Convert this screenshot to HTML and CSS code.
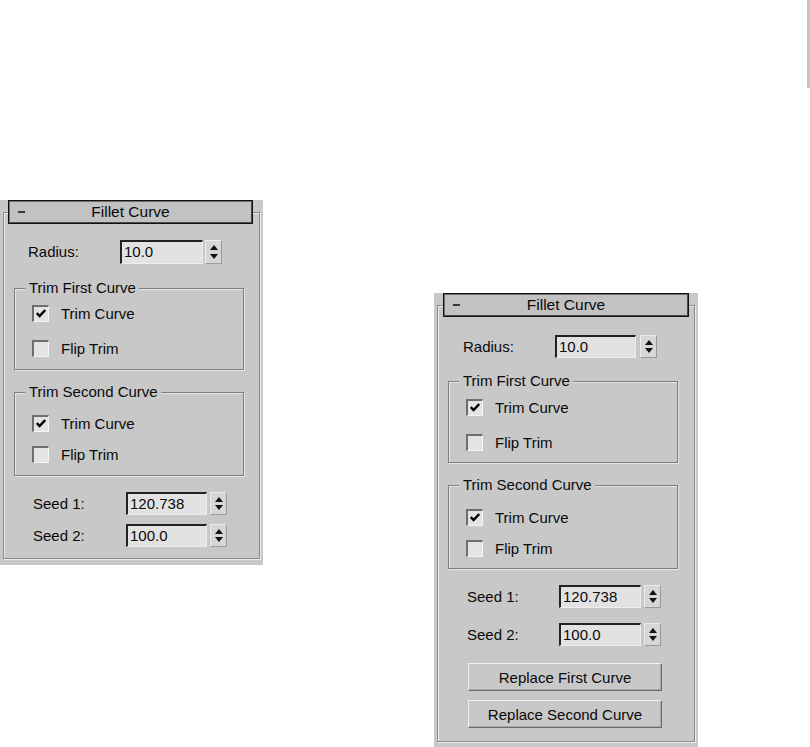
FILE: index.html
```html
<!DOCTYPE html>
<html>
<head>
<meta charset="utf-8">
<link rel="stylesheet" href="styles.css">
</head>
<body>
<div class="canvas">
  <div class="rollout rollout-a">
    <div class="frame">
      <div class="header"><span class="minus"></span><span class="title">Fillet Curve</span><span></span></div>
      <div class="spin-row radius"><span class="label">Radius:</span><span class="input">10.0</span><span class="arrows"><i class="up"></i><i class="down"></i></span></div>
      <div class="group g1">
        <div class="legend">Trim First Curve</div>
        <div class="check-row r1"><span class="box checked"><svg viewBox="0 0 10 9" width="10" height="9"><path d="M0.8 4 L3.6 7 L9.2 1" fill="none" stroke="#000" stroke-width="2.4"/></svg></span><span>Trim Curve</span></div>
        <div class="check-row r2"><span class="box"></span><span>Flip Trim</span></div>
      </div>
      <div class="group g2">
        <div class="legend">Trim Second Curve</div>
        <div class="check-row r1"><span class="box checked"><svg viewBox="0 0 10 9" width="10" height="9"><path d="M0.8 4 L3.6 7 L9.2 1" fill="none" stroke="#000" stroke-width="2.4"/></svg></span><span>Trim Curve</span></div>
        <div class="check-row r2"><span class="box"></span><span>Flip Trim</span></div>
      </div>
      <div class="spin-row seed s1"><span class="label">Seed 1:</span><span class="input">120.738</span><span class="arrows"><i class="up"></i><i class="down"></i></span></div>
      <div class="spin-row seed s2"><span class="label">Seed 2:</span><span class="input">100.0</span><span class="arrows"><i class="up"></i><i class="down"></i></span></div>
    </div>
  </div>

  <div class="rollout rollout-b">
    <div class="frame">
      <div class="header"><span class="minus"></span><span class="title">Fillet Curve</span><span></span></div>
      <div class="spin-row radius"><span class="label">Radius:</span><span class="input">10.0</span><span class="arrows"><i class="up"></i><i class="down"></i></span></div>
      <div class="group g1">
        <div class="legend">Trim First Curve</div>
        <div class="check-row r1"><span class="box checked"><svg viewBox="0 0 10 9" width="10" height="9"><path d="M0.8 4 L3.6 7 L9.2 1" fill="none" stroke="#000" stroke-width="2.4"/></svg></span><span>Trim Curve</span></div>
        <div class="check-row r2"><span class="box"></span><span>Flip Trim</span></div>
      </div>
      <div class="group g2">
        <div class="legend">Trim Second Curve</div>
        <div class="check-row r1"><span class="box checked"><svg viewBox="0 0 10 9" width="10" height="9"><path d="M0.8 4 L3.6 7 L9.2 1" fill="none" stroke="#000" stroke-width="2.4"/></svg></span><span>Trim Curve</span></div>
        <div class="check-row r2"><span class="box"></span><span>Flip Trim</span></div>
      </div>
      <div class="spin-row seed s1"><span class="label">Seed 1:</span><span class="input">120.738</span><span class="arrows"><i class="up"></i><i class="down"></i></span></div>
      <div class="spin-row seed s2"><span class="label">Seed 2:</span><span class="input">100.0</span><span class="arrows"><i class="up"></i><i class="down"></i></span></div>
      <div class="button b1">Replace First Curve</div>
      <div class="button b2">Replace Second Curve</div>
    </div>
  </div>

  <div class="edge-bar"></div>
</div>
</body>
</html>
```
FILE: styles.css
```css
* { box-sizing: border-box; }
html, body { margin: 0; padding: 0; background: #fff; }
body {
  font-family: "Liberation Sans", Arial, sans-serif;
  font-size: 15px;
  color: #0a0a0a;
}
.canvas {
  display: flex;
  align-items: flex-start;
  width: 810px;
  height: 747px;
  overflow: hidden;
}
.edge-bar {
  margin-left: auto;
  width: 3px;
  height: 88px;
  background: #c4c4c4;
}

/* rollout */
.rollout {
  background: #c8c8c8;
  padding-top: 12px;
  padding-bottom: 6px;
}
.rollout-a { margin-top: 200px; width: 263px; }
.rollout-b { margin-top: 293px; margin-left: 171px; width: 264px; }

.frame {
  margin: 0 3px;
  border: 1px solid #8a8a8a;
  box-shadow: inset 1px 1px 0 #ececec, 1px 1px 0 #ececec;
}
.rollout-a .frame { padding-bottom: 11px; }
.rollout-b .frame { padding-bottom: 13px; }

.header {
  display: grid;
  grid-template-columns: 1fr auto 1fr;
  align-items: center;
  height: 24px;
  margin: -13px 6px 0 4px;
  border: 1px solid #111;
  background: #c2c2c2;
  box-shadow: inset 1px 1px 0 #6e6e6e, inset -1px -1px 0 #4a4a4a;
  position: relative;
}
.rollout-b .header { margin-left: 5px; margin-right: 5px; }
.minus {
  width: 7px;
  height: 2px;
  background: #3a3a3a;
  margin-left: 9px;
}
.title { line-height: 20px; font-size: 15.5px; }

/* spinners */
.spin-row {
  display: flex;
  align-items: center;
  height: 23px;
}
.label { line-height: 18px; }
.input {
  width: 82px;
  height: 23px;
  background: #e2e2e2;
  border-top: 2px solid #222;
  border-left: 2px solid #222;
  border-right: 1px solid #ededed;
  border-bottom: 1px solid #ededed;
  padding-left: 2px;
  line-height: 20px;
}
.arrows {
  display: flex;
  flex-direction: column;
  justify-content: space-between;
  align-items: center;
  width: 17px;
  height: 23px;
  margin-left: 3px;
  background: #d6d6d6;
  border: 1px solid #ececec;
  border-right-color: #9a9a9a;
  border-bottom-color: #9a9a9a;
  padding: 4px 0 4px;
}
.arrows i {
  width: 0; height: 0;
  border-left: 4px solid transparent;
  border-right: 4px solid transparent;
}
.arrows .up { border-bottom: 5px solid #111; }
.arrows .down { border-top: 5px solid #111; }

.rollout-a .radius { margin-top: 16px; padding-left: 24px; height: 24px; }
.rollout-a .radius .label { width: 92px; }
.rollout-a .radius .input { width: 83px; height: 24px; }
.rollout-a .radius .arrows { margin-left: 2px; height: 24px; }
.rollout-a .seed { padding-left: 29px; }
.rollout-a .seed .label { width: 93px; }
.rollout-a .seed .input { width: 81px; }
.rollout-a .s1 { margin-top: 16px; }
.rollout-a .s2 { margin-top: 9px; }

.rollout-b .radius { margin-top: 18px; padding-left: 25px; }
.rollout-b .radius .label { width: 92px; }
.rollout-b .radius .input { width: 81px; }
.rollout-b .radius .arrows { margin-left: 4px; }
.rollout-b .seed { padding-left: 29px; }
.rollout-b .seed .label { width: 92px; }
.rollout-b .s1 { margin-top: 16px; }
.rollout-b .s2 { margin-top: 15px; }

/* groups */
.group {
  margin-left: 10px;
  width: 230px;
  border: 1px solid #7e7e7e;
  box-shadow: inset 1px 1px 0 #e6e6e6, 1px 1px 0 #e6e6e6;
}
.legend {
  width: fit-content;
  height: 16px;
  line-height: 16px;
  margin: -9px 0 0 10px;
  padding: 0 3px 0 4px;
  background: #c8c8c8;
}
.check-row {
  display: flex;
  align-items: center;
  height: 20px;
  padding-left: 17px;
}
.box {
  display: flex;
  align-items: center;
  justify-content: center;
  width: 17px;
  height: 17px;
  margin-right: 12px;
  background: #e4e4e4;
  border-top: 2px solid #6e6e6e;
  border-left: 2px solid #6e6e6e;
  border-right: 1px solid #f4f4f4;
  border-bottom: 1px solid #f4f4f4;
}
.box svg { display: block; }

.rollout-a .g1 { margin-top: 24px; height: 82px; }
.rollout-a .g1 .r1 { margin-top: 7px; }
.rollout-a .g1 .r2 { margin-top: 15px; }
.rollout-a .g2 { margin-top: 22px; height: 84px; }
.rollout-a .g2 .r1 { margin-top: 13px; }
.rollout-a .g2 .r2 { margin-top: 11px; }

.rollout-b .g1 { margin-top: 23px; height: 82px; }
.rollout-b .g1 .r1 { margin-top: 8px; }
.rollout-b .g1 .r2 { margin-top: 15px; }
.rollout-b .g2 { margin-top: 22px; height: 84px; }
.rollout-b .g2 .r1 { margin-top: 14px; }
.rollout-b .g2 .r2 { margin-top: 11px; }

/* buttons */
.button {
  display: flex;
  align-items: center;
  justify-content: center;
  margin-left: 30px;
  width: 194px;
  height: 28px;
  background: #c8c8c8;
  border: 1px solid #f0f0f0;
  border-right-color: #6c6c6c;
  border-bottom-color: #6c6c6c;
  box-shadow: inset -1px -1px 0 #a8a8a8;
}
.b1 { margin-top: 17px; }
.b2 { margin-top: 9px; }
```
